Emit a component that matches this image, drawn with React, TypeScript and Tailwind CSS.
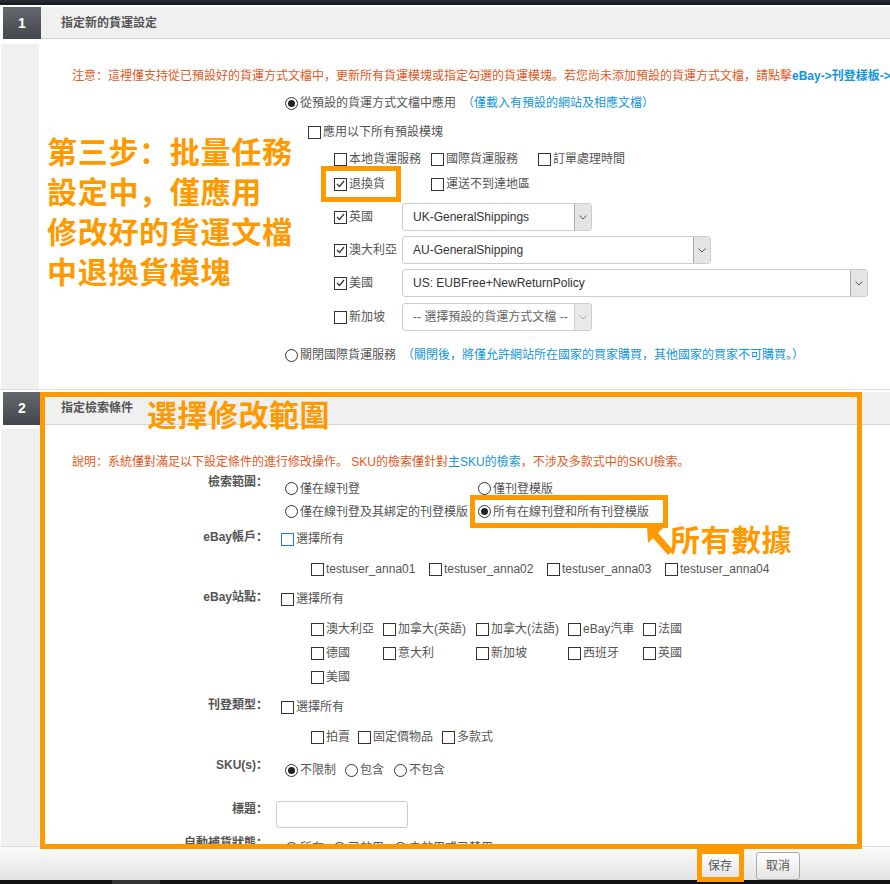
import React from "react";

const FONT = "font-['Liberation_Sans','Noto_Sans_CJK_SC',sans-serif]";
const CJK = "font-['Noto_Sans_CJK_SC',sans-serif]";

const Box = ({ on, blue }: { on?: boolean; blue?: boolean }) => (
  <span
    className={`inline-flex h-[13px] w-[13px] shrink-0 items-center justify-center border bg-white ${
      blue ? "border-[#1f78d6]" : "border-[#333]"
    }`}
  >
    {on && (
      <svg width="9" height="8" viewBox="0 0 9 8">
        <path d="M1 4 L3.5 6.5 L8 1" fill="none" stroke="#333" strokeWidth="1.2" />
      </svg>
    )}
  </span>
);

const Dot = ({ on }: { on?: boolean }) => (
  <span className="inline-flex h-[13px] w-[13px] shrink-0 items-center justify-center rounded-full border border-[#333] bg-white">
    {on && <span className="h-[7px] w-[7px] rounded-full bg-[#222]" />}
  </span>
);

type OptProps = { label: string; on?: boolean; radio?: boolean; w?: string; blue?: boolean };

const Opt = ({ label, on, radio, w = "", blue }: OptProps) => (
  <div className={`flex shrink-0 items-center gap-[2px] ${w}`}>
    {radio ? <Dot on={on} /> : <Box on={on} blue={blue} />}
    <span className="whitespace-nowrap">{label}</span>
  </div>
);

const Chevron = ({ light }: { light?: boolean }) => (
  <svg width="8" height="5" viewBox="0 0 8 5">
    <path d="M0.5 0.5 L4 4 L7.5 0.5" fill="none" stroke={light ? "#aaa" : "#555"} strokeWidth="1" />
  </svg>
);

const Select = ({ text, w, disabled }: { text: string; w: string; disabled?: boolean }) => (
  <div className={`flex h-[28px] items-center rounded-[3px] border border-[#ccc] bg-white ${w}`}>
    <span className={`flex-1 truncate pl-[10px] ${disabled ? "text-[#666]" : "text-[#333]"}`}>{text}</span>
    <span
      className={`flex h-full w-[17px] items-center justify-center rounded-r-[3px] border-l ${
        disabled ? "border-[#ccc] bg-[#e9e9e9]" : "border-[#aaa] bg-[#e4e4e4]"
      }`}
    >
      <Chevron light={disabled} />
    </span>
  </div>
);

const Head = ({ n, title, h }: { n: string; title: string; h: string }) => (
  <div className={`flex ${h}`}>
    <div className="ml-[3px] flex w-[38px] items-center justify-center bg-linear-to-b from-[#65686f] to-[#43464c] text-[14px] font-bold text-white">
      {n}
    </div>
    <div className="flex flex-1 items-center border-b border-[#d6d6d6] bg-[#f0f0f0] pl-[20px] font-bold text-[#555]">
      {title}
    </div>
  </div>
);

const Label = ({ text, className = "" }: { text: string; className?: string }) => (
  <div className={`w-[228px] shrink-0 text-right font-bold leading-[20px] text-[#555] ${className}`}>{text}</div>
);

const Line = ({ children, className = "" }: { children: React.ReactNode; className?: string }) => (
  <div className={`flex items-center ${className}`}>{children}</div>
);

export default function App() {
  return (
    <div className={`relative flex h-[884px] w-[890px] flex-col overflow-hidden bg-white text-[12px] text-[#555] ${FONT}`}>
      <div className="h-[5px] shrink-0 bg-linear-to-b from-[#2a2e36] to-[#15171b]" />

      <div className="flex-1 overflow-hidden pt-[2px]">
        {/* section 1 */}
        <Head n="1" title="指定新的貨運設定" h="h-[32px]" />
        <div className="flex h-[350px]">
          <div className="ml-[1px] mt-[5px] w-[38px] bg-[#f0f0f0]" />
          <div className="ml-[1px] flex-1 overflow-hidden">
            <p className="ml-[32px] mt-[27px] h-[20px] whitespace-nowrap leading-[20px] text-[#e3581c]">
              注意：這裡僅支持從已預設好的貨運方式文檔中，更新所有貨運模塊或指定勾選的貨運模塊。若您尚未添加預設的貨運方式文檔，請點擊
              <span className="font-bold text-[#1296db]">eBay-&gt;刊登樣板-&gt;貨運設定</span>
            </p>
            <Line className="ml-[245px] mt-[7px] h-[20px]">
              <Opt radio on label="從預設的貨運方式文檔中應用" />
              <span className="ml-[6px] whitespace-nowrap text-[#1296db]">（僅載入有預設的網站及相應文檔）</span>
            </Line>
            <Line className="ml-[268px] mt-[9px] h-[20px]">
              <Opt label="應用以下所有預設模塊" />
            </Line>
            <Line className="ml-[294px] mt-[7px] h-[20px]">
              <Opt label="本地貨運服務" w="w-[97px]" />
              <Opt label="國際貨運服務" w="w-[107px]" />
              <Opt label="訂單處理時間" />
            </Line>
            <Line className="ml-[294px] mt-[5px] h-[20px]">
              <Opt on label="退換貨" w="w-[97px]" />
              <Opt label="運送不到達地區" />
            </Line>
            <Line className="ml-[294px] mt-[9px]">
              <Opt on label="英國" w="w-[68px]" />
              <Select text="UK-GeneralShippings" w="w-[190px]" />
            </Line>
            <Line className="ml-[294px] mt-[5px]">
              <Opt on label="澳大利亞" w="w-[68px]" />
              <Select text="AU-GeneralShipping" w="w-[309px]" />
            </Line>
            <Line className="ml-[294px] mt-[5px]">
              <Opt on label="美國" w="w-[68px]" />
              <Select text="US: EUBFree+NewReturnPolicy" w="w-[466px]" />
            </Line>
            <Line className="ml-[294px] mt-[6px]">
              <Opt label="新加坡" w="w-[68px]" />
              <Select disabled text="-- 選擇預設的貨運方式文檔 --" w="w-[190px]" />
            </Line>
            <Line className="ml-[245px] mt-[14px] h-[20px]">
              <Opt radio label="關閉國際貨運服務" />
              <span className="ml-[6px] whitespace-nowrap text-[#1296db]">
                （關閉後，將僅允許網站所在國家的買家購買，其他國家的買家不可購買。）
              </span>
            </Line>
          </div>
        </div>
        <div className="h-[1px] bg-[#dcdcdc]" />

        {/* section 2 */}
        <div className="mt-[2px]">
          <Head n="2" title="指定檢索條件" h="h-[33px]" />
          <div className="flex">
            <div className="ml-[1px] mt-[4px] w-[38px] self-stretch bg-[#f0f0f0]" />
            <div className="ml-[1px] flex-1 overflow-hidden">
              <p className="ml-[32px] mt-[27px] h-[20px] whitespace-nowrap leading-[20px] text-[#e3581c]">
                說明：系統僅對滿足以下設定條件的進行修改操作。 SKU的檢索僅針對
                <span className="text-[#1296db]">主SKU的檢索</span>，不涉及多款式中的SKU檢索。
              </p>

              <div className="flex">
                <Label text="檢索範圍：" />
                <div className="ml-[8px] mt-[5px] pl-[9px]">
                  <Line className="h-[23px]">
                    <Opt radio label="僅在線刊登" w="w-[193px]" />
                    <Opt radio label="僅刊登模版" />
                  </Line>
                  <Line className="h-[23px]">
                    <Opt radio label="僅在線刊登及其綁定的刊登模版" w="w-[193px]" />
                    <Opt radio on label="所有在線刊登和所有刊登模版" />
                  </Line>
                </div>
              </div>

              <div className="mt-[4px] flex">
                <Label text="eBay帳戶：" />
                <div className="ml-[8px] mt-[2px]">
                  <Line className="h-[20px] pl-[5px]">
                    <Opt blue label="選擇所有" />
                  </Line>
                  <Line className="mt-[10px] h-[20px] pl-[35px]">
                    <Opt label="testuser_anna01" w="w-[118px]" />
                    <Opt label="testuser_anna02" w="w-[118px]" />
                    <Opt label="testuser_anna03" w="w-[118px]" />
                    <Opt label="testuser_anna04" />
                  </Line>
                </div>
              </div>

              <div className="mt-[8px] flex">
                <Label text="eBay站點：" />
                <div className="ml-[8px] mt-[2px]">
                  <Line className="h-[20px] pl-[5px]">
                    <Opt label="選擇所有" />
                  </Line>
                  <div className="mt-[8px] pl-[35px]">
                    <Line className="h-[24px]">
                      <Opt label="澳大利亞" w="w-[72px]" />
                      <Opt label="加拿大(英語)" w="w-[93px]" />
                      <Opt label="加拿大(法語)" w="w-[92px]" />
                      <Opt label="eBay汽車" w="w-[75px]" />
                      <Opt label="法國" />
                    </Line>
                    <Line className="h-[24px]">
                      <Opt label="德國" w="w-[72px]" />
                      <Opt label="意大利" w="w-[93px]" />
                      <Opt label="新加坡" w="w-[92px]" />
                      <Opt label="西班牙" w="w-[75px]" />
                      <Opt label="英國" />
                    </Line>
                    <Line className="h-[24px]">
                      <Opt label="美國" />
                    </Line>
                  </div>
                </div>
              </div>

              <div className="mt-[6px] flex">
                <Label text="刊登類型：" />
                <div className="ml-[8px] mt-[2px]">
                  <Line className="h-[20px] pl-[5px]">
                    <Opt label="選擇所有" />
                  </Line>
                  <Line className="mt-[10px] h-[20px] pl-[35px]">
                    <Opt label="拍賣" w="w-[47px]" />
                    <Opt label="固定價物品" w="w-[84px]" />
                    <Opt label="多款式" />
                  </Line>
                </div>
              </div>

              <div className="mt-[8px] flex">
                <Label text="SKU(s)：" />
                <Line className="ml-[8px] mt-[5px] h-[20px] pl-[9px]">
                  <Opt radio on label="不限制" w="w-[60px]" />
                  <Opt radio label="包含" w="w-[49px]" />
                  <Opt radio label="不包含" />
                </Line>
              </div>

              <div className="mt-[19px] flex">
                <Label text="標題：" />
                <div className="ml-[8px] mt-[2px] h-[27px] w-[132px] rounded-[3px] border border-[#ccc] bg-white" />
              </div>

              <div className="mt-[5px] flex">
                <Label text="自動補貨狀態：" />
                <Line className="ml-[8px] mt-[5px] h-[20px] pl-[9px]">
                  <Opt radio on label="所有" w="w-[48px]" />
                  <Opt radio label="已啟用" w="w-[61px]" />
                  <Opt radio label="未啟用或已禁用" />
                </Line>
              </div>
              <div className="h-[60px]" />
            </div>
          </div>
        </div>
      </div>

      {/* footer */}
      <div className="flex h-[34px] shrink-0 items-start justify-end gap-[15px] border-t border-[#dcdcdc] bg-linear-to-b from-[#fbfbfb] to-[#e3e3e3] pr-[90px] pt-[5px]">
        <button className="h-[28px] w-[42px] rounded-[3px] border border-[#aaa] bg-linear-to-b from-white to-[#e4e4e4] text-[12px] text-[#555]">
          保存
        </button>
        <button className="h-[28px] w-[44px] rounded-[3px] border border-[#aaa] bg-linear-to-b from-white to-[#e4e4e4] text-[12px] text-[#555]">
          取消
        </button>
      </div>
      <div className="flex h-[4px] shrink-0 bg-[#111]">
        <div className="ml-[112px] w-[48px] bg-[#333]" />
      </div>

      {/* annotations */}
      <div className="pointer-events-none absolute left-[321px] top-[166px] h-[36px] w-[80px] border-[5px] border-[#ff9900]" />
      <div className="pointer-events-none absolute left-[40px] top-[392px] h-[457px] w-[822px] border-[5px] border-[#ff9900]" />
      <div className="pointer-events-none absolute left-[470px] top-[495px] h-[33px] w-[198px] border-[5px] border-[#ff9900]" />
      <div className="pointer-events-none absolute left-[697px] top-[849px] h-[33px] w-[47px] border-[5px] border-[#ff9900]" />

      <div className={`absolute left-[47px] top-[130px] text-[30px] font-bold leading-[40px] tracking-[0.7px] text-[#ff9900] ${CJK}`}>
        <div>第三步：批量任務</div>
        <div>設定中，僅應用</div>
        <div>修改好的貨運文檔</div>
        <div>中退換貨模塊</div>
      </div>
      <div className={`absolute left-[147px] top-[398px] text-[30px] font-bold leading-none tracking-[0.5px] text-[#ff9900] ${CJK}`}>
        選擇修改範圍
      </div>
      <svg className="absolute left-[645px] top-[524px]" width="30" height="32" viewBox="0 0 30 32">
        <path d="M2 2 L18 4 L13 9 L28 26 L23 31 L8 14 L3 19 Z" fill="#ff9900" />
      </svg>
      <div className={`absolute left-[670px] top-[523px] text-[30px] font-bold leading-none tracking-[0.5px] text-[#ff9900] ${CJK}`}>
        所有數據
      </div>
    </div>
  );
}
